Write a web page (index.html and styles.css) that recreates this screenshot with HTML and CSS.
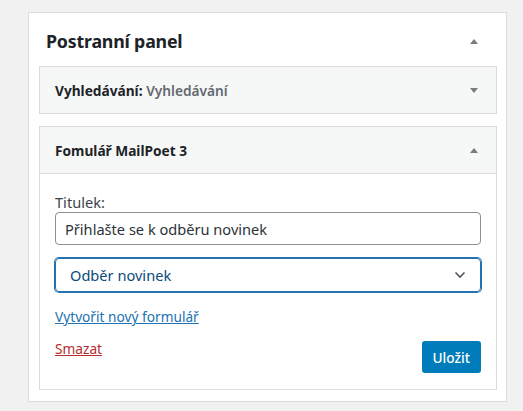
FILE: index.html
```html
<!DOCTYPE html>
<html lang="cs">
<head>
<meta charset="utf-8">
<link rel="stylesheet" href="styles.css">
</head>
<body>
<div class="sidebar">
  <div class="sidebar-head">
    <h2 class="sidebar-title">Postranní panel</h2>
    <span class="tri tri-up"></span>
  </div>
  <div class="widgets">
    <div class="widget">
      <div class="widget-head">
        <h3 class="widget-title">Vyhledávání<span class="colon">:</span> <span class="in-title">Vyhledávání</span></h3>
        <span class="tri tri-down"></span>
      </div>
    </div>
    <div class="widget open">
      <div class="widget-head">
        <h3 class="widget-title">Fomulář MailPoet 3</h3>
        <span class="tri tri-up"></span>
      </div>
      <div class="widget-body">
        <label class="label">Titulek:</label>
        <div class="input">Přihlašte se k odběru novinek</div>
        <div class="select">
          <span>Odběr novinek</span>
          <svg class="chev" width="12" height="8" viewBox="0 0 12 8"><path d="M1.5 1.5 L6 6 L10.5 1.5" fill="none" stroke="#50575e" stroke-width="1.6"/></svg>
        </div>
        <a class="link" href="#">Vytvořit nový formulář</a>
        <div class="actions">
          <a class="delete" href="#">Smazat</a>
          <span class="button">Uložit</span>
        </div>
      </div>
    </div>
  </div>
</div>
</body>
</html>
```
FILE: styles.css
```css
html, body {
  margin: 0;
  padding: 0;
  background: #f1f1f1;
}
body {
  font-family: "Noto Sans", "Open Sans", sans-serif;
  color: #1d2327;
  padding: 12px 0 0 28px;
}
.sidebar {
  width: 477px;
  background: #fff;
  border: 1px solid #dcdcde;
  padding-bottom: 11px;
}
.sidebar-head {
  height: 53px;
  display: flex;
  align-items: center;
  justify-content: space-between;
  padding: 3px 28px 0 17px;
  box-sizing: border-box;
}
.sidebar-title {
  margin: 0;
  font-size: 17.8px;
  font-weight: 700;
  letter-spacing: -0.2px;
  color: #1d2327;
}
.tri {
  width: 0;
  height: 0;
  border-left: 4px solid transparent;
  border-right: 4px solid transparent;
}
.tri-up { border-bottom: 5px solid #787c82; }
.tri-down { border-top: 5px solid #787c82; }
.widgets {
  padding: 0 9px 0 10px;
  display: flex;
  flex-direction: column;
  gap: 12px;
}
.widget {
  border: 1px solid #dcdcde;
  background: #fff;
}
.widget-head {
  height: 46px;
  background: #f6f7f7;
  display: flex;
  align-items: center;
  justify-content: space-between;
  padding: 0 18px 0 15px;
}
.widget.open .widget-head {
  border-bottom: 1px solid #dcdcde;
}
.widget-title {
  margin: 0;
  font-size: 13.7px;
  font-weight: 700;
  color: #1d2327;
}
.in-title {
  font-weight: 600;
  color: #646970;
}
.widget-body {
  padding: 19px 15px 16px;
  display: flex;
  flex-direction: column;
}
.label {
  font-size: 14.6px;
  line-height: 19px;
  color: #3c434a;
}
.input {
  height: 33px;
  box-sizing: border-box;
  border: 1px solid #8c8f94;
  border-radius: 4px;
  padding: 0 9px;
  display: flex;
  align-items: center;
  font-size: 14.6px;
  color: #2c3338;
}
.select {
  margin-top: 13px;
  height: 34px;
  box-sizing: border-box;
  border: 1px solid #2271b1;
  box-shadow: 0 0 0 1px #2271b1;
  border-radius: 4px;
  padding: 0 14px 0 14px;
  display: flex;
  align-items: center;
  justify-content: space-between;
  font-size: 14.6px;
  color: #0a4b78;
}
.link {
  margin-top: 15px;
  align-self: flex-start;
  font-size: 13.7px;
  line-height: 19px;
  color: #2271b1;
  text-decoration: underline;
}
.actions {
  margin-top: 14px;
  display: flex;
  justify-content: space-between;
  align-items: flex-start;
}
.delete {
  font-size: 13.7px;
  line-height: 18px;
  color: #b32d2e;
  text-decoration: underline;
}
.button {
  margin-top: 1px;
  height: 32px;
  box-sizing: border-box;
  padding: 0 11px;
  display: flex;
  align-items: center;
  background: #007cba;
  border-radius: 3px;
  color: #fff;
  font-size: 13.7px;
  font-weight: 500;
}
```
